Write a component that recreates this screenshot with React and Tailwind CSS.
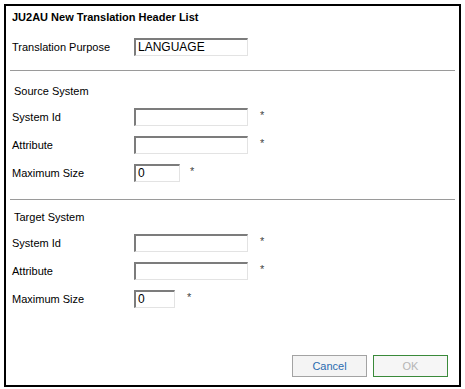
const font = { fontFamily: '"Liberation Sans", Arial, sans-serif' };

const Field = ({ label, value = "", width, starGap = "ml-[12px]", mt = "mt-[10px]" }) => (
    <div className={`flex items-center h-[18px] ${mt}`}>
        <span className="w-[128px] pl-[6px] text-[11px] text-black">{label}</span>
        <div
            className={`${width} h-[18px] bg-white border-t-2 border-l-2 border-r border-b border-t-[#7c7c7c] border-l-[#7c7c7c] border-r-[#e3e3e3] border-b-[#e3e3e3] text-[12px] leading-[15px] pl-[2px] text-black`}
        >
            {value}
        </div>
        <span className={`${starGap} text-[11px] text-[#444444] -mt-[3px]`}>*</span>
    </div>
);

const Divider = ({ mt }) => (
    <div className={`${mt} ml-[4px] mr-[4px] h-px bg-[#9a9a9a]`} />
);

export default function App() {
    return (
        <div className="w-[465px] h-[389px] bg-white p-[4px]" style={font}>
            <div className="h-[383px] border-2 border-black bg-white flex flex-col">
                <div className="h-[22px] flex items-center pl-[6px] text-[11px] font-bold text-black">
                    JU2AU New Translation Header List
                </div>

                <div className="flex items-center h-[18px] mt-[10px]">
                    <span className="w-[128px] pl-[6px] text-[11px] text-black">
                        Translation Purpose
                    </span>
                    <div className="w-[114px] h-[18px] border-t-2 border-l-2 border-r border-b border-t-[#7c7c7c] border-l-[#7c7c7c] border-r-[#e3e3e3] border-b-[#e3e3e3] text-[12px] leading-[15px] pl-[2px] text-black">
                        LANGUAGE
                    </div>
                </div>

                <Divider mt="mt-[14px]" />

                {/* Source */}
                <div className="h-[18px] mt-[11px] flex items-center pl-[8px] text-[11px] text-black">
                    Source System
                </div>
                <Field label="System Id" width="w-[114px]" mt="mt-[8px]" />
                <Field label="Attribute" width="w-[114px]" />
                <Field label="Maximum Size" value="0" width="w-[46px]" starGap="ml-[10px]" />

                <Divider mt="mt-[17px]" />

                {/* Target */}
                <div className="h-[18px] mt-[8px] flex items-center pl-[8px] text-[11px] text-black">
                    Target System
                </div>
                <Field label="System Id" width="w-[114px]" mt="mt-[8px]" />
                <Field label="Attribute" width="w-[114px]" />
                <Field label="Maximum Size" value="0" width="w-[41px]" starGap="ml-[12px]" />

                <div className="mt-auto mb-[8px] mr-[11px] flex justify-end gap-[6px]">
                    <button className="w-[75px] h-[22px] bg-[#f4f4f4] border border-[#a3a3a3] text-[11px] text-[#2a6bb0]">
                        Cancel
                    </button>
                    <button className="w-[75px] h-[22px] bg-[#f6f6f6] border border-[#3a8a3a] text-[11px] text-[#b5b5b5]">
                        OK
                    </button>
                </div>
            </div>
        </div>
    );
}
